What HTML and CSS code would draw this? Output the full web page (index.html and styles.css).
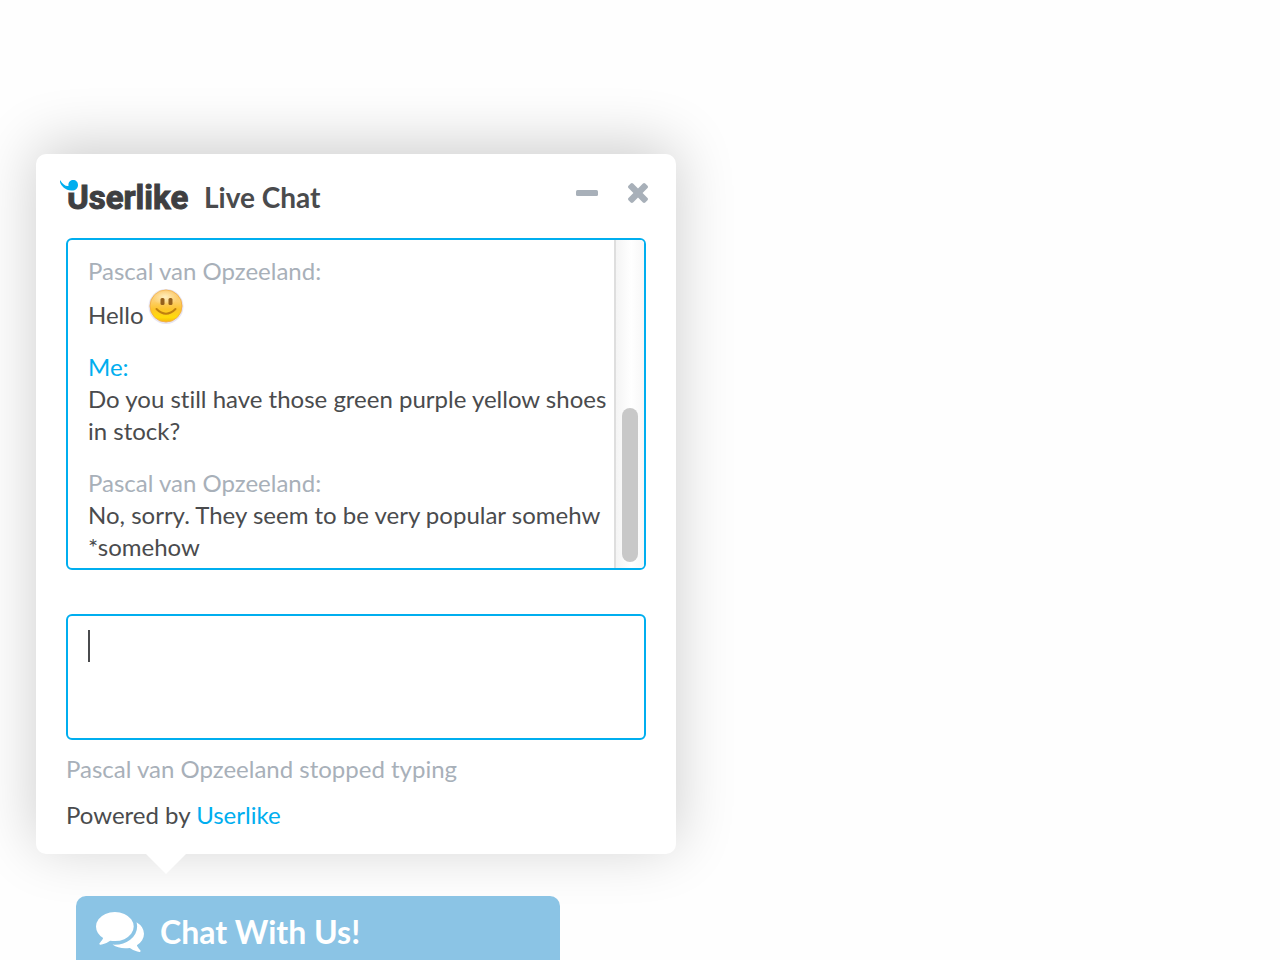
FILE: index.html
```html
<!DOCTYPE html>
<html lang="en">
<head>
<meta charset="utf-8">
<meta name="viewport" content="width=device-width, initial-scale=1">
<title>Userlike Live Chat</title>
<link rel="stylesheet" href="styles.css">
</head>
<body>
<main class="page">
  <section class="chat" aria-label="Live Chat">
    <header class="chat-header">
      <svg class="logo" viewBox="0 -4 130 42" role="img" aria-label="Userlike">
        <text class="logo-text" x="7" y="29">Userlike</text>
        <path d="M4 0H19V12.500H4Z" fill="#fff"/>
        <path d="M0 0C3 4.500 5.500 6.500 8.500 6C8 2.500 10 0 13 0C16 0 18 2 18 5C18 8.500 15.500 10.500 12 10.500C6 11 1 6 0 2Z" fill="#00aeef"/>
      </svg>
      <h1 class="title">Live Chat</h1>
      <div class="controls">
        <button class="control" type="button" aria-label="Minimize">
          <svg width="22" height="6" viewBox="0 0 22 6"><rect width="22" height="6" rx="1.500"/></svg>
        </button>
        <button class="control" type="button" aria-label="Close">
          <svg width="20" height="20" viewBox="302 366 1188 1188"><path d="M1490 1322q0 40-28 68l-136 136q-28 28-68 28t-68-28l-294-294-294 294q-28 28-68 28t-68-28l-136-136q-28-28-28-68t28-68l294-294-294-294q-28-28-28-68t28-68l136-136q28-28 68-28t68 28l294 294 294-294q28-28 68-28t68 28l136 136q28 28 28 68t-28 68l-294 294 294 294q28 28 28 68z"/></svg>
        </button>
      </div>
    </header>
    <div class="log">
      <div class="messages">
        <article class="message">
          <p class="author">Pascal van Opzeeland:</p>
          <p class="with-smiley">Hello
            <svg class="smiley" viewBox="0 0 36 36" role="img" aria-label="Smile">
              <defs>
                <linearGradient id="face" x1="0" y1="0" x2="0" y2="1">
                  <stop offset="0" stop-color="#fbc566"/>
                  <stop offset=".35" stop-color="#fdcf6c"/>
                  <stop offset=".6" stop-color="#fdc42c"/>
                  <stop offset=".85" stop-color="#ffdc0a"/>
                  <stop offset="1" stop-color="#f6b70f"/>
                </linearGradient>
                <radialGradient id="shine">
                  <stop offset="0" stop-color="#ffefc0"/>
                  <stop offset="1" stop-color="#ffefc0" stop-opacity="0"/>
                </radialGradient>
              </defs>
              <circle cx="18" cy="18.500" r="17.500" fill="#e7e5f2"/>
              <circle cx="18" cy="18" r="16" fill="url(#face)" stroke="#f2b04a" stroke-width="1"/>
              <ellipse cx="17" cy="9" rx="13" ry="8" fill="url(#shine)"/>
              <rect x="12.500" y="10" width="4" height="7" rx="1.500" fill="#95601c"/>
              <rect x="20.500" y="10" width="4" height="7" rx="1.500" fill="#95601c"/>
              <path d="M8.500 21Q18 30.500 27.500 21" fill="none" stroke="#bf8010" stroke-width="2" stroke-linecap="round"/>
            </svg>
          </p>
        </article>
        <article class="message">
          <p class="author me">Me:</p>
          <p>Do you still have those green purple yellow shoes in stock?</p>
        </article>
        <article class="message">
          <p class="author">Pascal van Opzeeland:</p>
          <p>No, sorry. They seem to be very popular somehw</p>
          <p>*somehow</p>
        </article>
      </div>
      <div class="track"><div class="thumb"></div></div>
    </div>
    <div class="composer">
      <textarea class="input" aria-label="Message"></textarea>
      <span class="caret"></span>
    </div>
    <p class="status">Pascal van Opzeeland stopped typing</p>
    <p class="powered">Powered by <a class="link" href="#">Userlike</a></p>
  </section>
  <button class="launcher" type="button">
    <svg class="bubbles" viewBox="0 256 1792 1408" preserveAspectRatio="none" aria-hidden="true"><path d="M1408 768q0 139-94 257t-256.500 186.500-353.500 68.500q-86 0-176-16-124 88-278 128-36 9-86 16h-3q-11 0-20.500-8t-11.500-21q-1-3-1-6.500t.5-6.500 2-6l2.500-5 3.500-5.500 4-5 4.500-5 4-4.500q5-6 23-25t26-29.500 22.500-29 25-38.500 20.500-44q-124-72-195-177t-71-224q0-139 94-257t256.500-186.500 353.500-68.500 353.500 68.500 256.500 186.500 94 257zm384 256q0 120-71 224.500t-195 176.500q10 24 20.500 44t25 38.500 22.500 29 26 29.500 23 25q1 1 4 4.500t4.500 5 4 5 3.500 5.500l2.500 5 2 6 .5 6.500-1 6.500q-3 14-13 22t-22 7q-50-7-86-16-154-40-278-128-90 16-176 16-271 0-472-132 58 4 88 4 161 0 309-45t264-129q125-92 192-212t67-254q0-77-23-152 129 71 204 178t75 230z"/></svg>
    Chat With Us!
  </button>
</main>
</body>
</html>
```
FILE: styles.css
```css
* { box-sizing: border-box; }

body {
  margin: 0;
  background: #fefefe;
  color: #4a4b4d;
  font: 24px/32px Lato, sans-serif;
  font-variant-ligatures: none;
}

p, h1 { margin: 0; }

.page {
  display: flex;
  flex-direction: column;
  justify-content: flex-end;
  align-items: flex-start;
  gap: 42px;
  min-height: 100vh;
  padding: 0 36px;
}

.chat {
  position: relative;
  width: 100%;
  max-width: 640px;
  padding: 22px 30px 23px;
  border-radius: 10px;
  background: #fff;
  box-shadow: 0 -8px 60px rgba(0, 0, 0, .2);
}

.chat::after {
  content: "";
  position: absolute;
  top: 100%;
  left: 110px;
  border: 20px solid transparent;
  border-top-color: #fff;
  border-bottom: 0;
}

.chat-header {
  display: flex;
  align-items: flex-start;
  gap: 14px;
  margin: 0 -2px 20px -6px;
}

.logo { width: 130px; height: 42px; overflow: visible; }

.logo-text {
  fill: #3e3f41;
  stroke: #3e3f41;
  stroke-width: 1px;
  font: bold 33px Roboto, Arial, sans-serif;
}

.title {
  padding-top: 2px;
  font-size: 28px;
  line-height: 38px;
  font-weight: 700;
}

.controls {
  display: flex;
  align-items: center;
  gap: 30px;
  height: 34px;
  margin-left: auto;
}

.control {
  display: flex;
  padding: 0;
  border: 0;
  background: none;
  fill: #a8b0b9;
}

.log {
  display: flex;
  border: 2px solid #00aeef;
  border-radius: 6px;
  overflow: hidden;
}

.messages {
  display: flex;
  flex: 1;
  flex-direction: column;
  gap: 20px;
  padding: 15px 2px 5px 20px;
}

.author { color: #a8b0b9; }
.me { color: #00aeef; }

.with-smiley {
  display: flex;
  align-items: flex-end;
  gap: 4px;
  height: 44px;
}

.smiley { width: 36px; height: 36px; margin-bottom: 7px; }

.track {
  display: flex;
  align-items: flex-end;
  width: 30px;
  padding: 6px;
  border-left: 2px solid #dedede;
  background: linear-gradient(90deg, #f4f4f4, #fff 55%, #f7f7f7);
}

.thumb {
  width: 16px;
  height: 154px;
  border-radius: 8px;
  background: #c8c8c8;
}

.composer { position: relative; margin-top: 44px; }

.input {
  display: block;
  width: 100%;
  height: 126px;
  padding: 14px 20px;
  border: 2px solid #00aeef;
  border-radius: 6px;
  outline: 0;
  background: #fff;
  color: inherit;
  font: inherit;
  resize: none;
}

.caret {
  position: absolute;
  top: 16px;
  left: 22px;
  width: 2px;
  height: 32px;
  background: #4a4b4d;
}

.status { margin-top: 13px; color: #a8b0b9; }
.powered { margin-top: 14px; }
.link { color: #00aeef; text-decoration: none; }

.launcher {
  display: flex;
  align-items: center;
  gap: 16px;
  width: 100%;
  max-width: 484px;
  height: 64px;
  margin-left: 40px;
  padding: 8px 20px 0;
  border: 0;
  border-radius: 10px 10px 0 0;
  background: #8bc4e5;
  color: #fff;
  font: bold 32px/40px Lato, sans-serif;
  z-index: 1;
}

.bubbles { width: 48px; height: 40px; fill: #fff; }
```
